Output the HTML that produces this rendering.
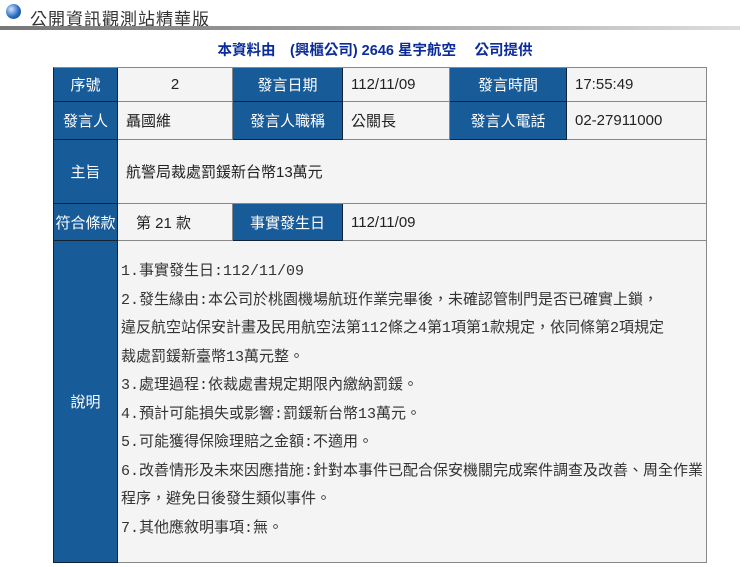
<!DOCTYPE html>
<html><head><meta charset="utf-8"><style>
body{margin:0;width:750px;height:567px;background:#fff;font-family:"Liberation Sans","Noto Sans CJK TC",sans-serif;position:relative;overflow:hidden}
.t{position:absolute;left:30px;top:5px;font-size:17px;color:#333;letter-spacing:1px}
.bar{position:absolute;left:0;top:26px;width:740px;height:4px;background:linear-gradient(to right,#777,#999 40%,#ddd)}
.globe{position:absolute;left:6px;top:4px;width:15px;height:15px;border-radius:50%;background:radial-gradient(circle at 35% 35%,#cfe4ff,#2a6bc0 55%,#123a78)}
.src{position:absolute;left:0;width:750px;top:39px;text-align:center;font-size:14.5px;font-weight:bold;color:#0a2b9a;white-space:pre}
.c{position:absolute;box-sizing:border-box;display:flex;align-items:center;font-size:15px;color:#222;background:#f4f4f4;border-right:1px solid #888;border-bottom:1px solid #888;padding-left:8px}
.h{background:#185b99;color:#fff;justify-content:center;padding:0;border-color:#123;}
.ctr{justify-content:center;padding:0}
.body{position:absolute;left:121px;top:258px;font-size:15px;color:#333;line-height:28.5px;font-family:"Liberation Mono","Noto Sans CJK TC",monospace;white-space:nowrap}
</style></head><body>
<div class="globe"></div><div class="t">公開資訊觀測站精華版</div><div class="bar"></div>
<div class="src">本資料由　(興櫃公司) 2646 星宇航空　 公司提供</div>
<div style="position:absolute;left:53px;top:67px;width:654px;height:496px;border-top:1px solid #888;border-left:1px solid #123;box-sizing:border-box"></div>
<div class="c h" style="left:54px;top:68px;width:64px;height:34px">序號</div>
<div class="c ctr" style="left:118px;top:68px;width:115px;height:34px">2</div>
<div class="c h" style="left:233px;top:68px;width:110px;height:34px">發言日期</div>
<div class="c" style="left:343px;top:68px;width:107px;height:34px">112/11/09</div>
<div class="c h" style="left:450px;top:68px;width:117px;height:34px">發言時間</div>
<div class="c" style="left:567px;top:68px;width:140px;height:34px">17:55:49</div>
<div class="c h" style="left:54px;top:102px;width:64px;height:38px">發言人</div>
<div class="c" style="left:118px;top:102px;width:115px;height:38px">聶國維</div>
<div class="c h" style="left:233px;top:102px;width:110px;height:38px">發言人職稱</div>
<div class="c" style="left:343px;top:102px;width:107px;height:38px">公關長</div>
<div class="c h" style="left:450px;top:102px;width:117px;height:38px">發言人電話</div>
<div class="c" style="left:567px;top:102px;width:140px;height:38px">02-27911000</div>
<div class="c h" style="left:54px;top:140px;width:64px;height:64px">主旨</div>
<div class="c" style="left:118px;top:140px;width:589px;height:64px">航警局裁處罰鍰新台幣13萬元</div>
<div class="c h" style="left:54px;top:204px;width:64px;height:37px">符合條款</div>
<div class="c" style="left:118px;top:204px;width:115px;height:37px;padding-left:18px">第 21 款</div>
<div class="c h" style="left:233px;top:204px;width:110px;height:37px">事實發生日</div>
<div class="c" style="left:343px;top:204px;width:364px;height:37px">112/11/09</div>
<div class="c h" style="left:54px;top:241px;width:64px;height:322px">說明</div>
<div class="c" style="left:118px;top:241px;width:589px;height:322px"></div>
<div class="body">1.事實發生日:112/11/09<br>2.發生緣由:本公司於桃園機場航班作業完畢後，未確認管制門是否已確實上鎖，<br>違反航空站保安計畫及民用航空法第112條之4第1項第1款規定，依同條第2項規定<br>裁處罰鍰新臺幣13萬元整。<br>3.處理過程:依裁處書規定期限內繳納罰鍰。<br>4.預計可能損失或影響:罰鍰新台幣13萬元。<br>5.可能獲得保險理賠之金額:不適用。<br>6.改善情形及未來因應措施:針對本事件已配合保安機關完成案件調查及改善、周全作業<br>程序，避免日後發生類似事件。<br>7.其他應敘明事項:無。</div>
</body></html>
